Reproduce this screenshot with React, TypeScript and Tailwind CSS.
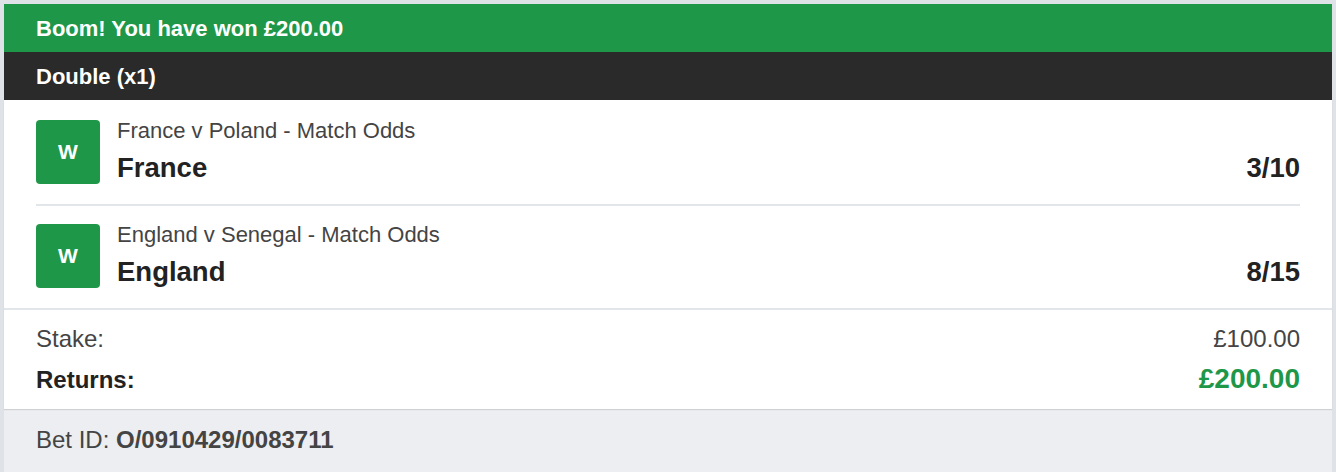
import React from "react";

const font = { fontFamily: '"Liberation Sans", Arial, Helvetica, sans-serif' };

function Leg({ market, selection, odds, first }: { market: string; selection: string; odds: string; first?: boolean }) {
  return (
    <div className={`flex items-start ${first ? "pt-5" : "pt-[18px]"} pb-5`}>
      <div className="flex h-16 w-16 shrink-0 items-center justify-center rounded-[4px] bg-[#1e9749] text-[21px] font-bold text-white">
        W
      </div>
      <div className="ml-[17px] -mt-[2px] flex min-w-0 flex-1 flex-col">
        <div className="text-[22px] leading-[26px] text-[#444]">{market}</div>
        <div className="mt-[8px] flex items-baseline justify-between text-[27.5px] leading-[31px] font-bold text-[#222]">
          <span>{selection}</span>
          <span>{odds}</span>
        </div>
      </div>
    </div>
  );
}

export default function App() {
  return (
    <div className="h-[472px] w-[1336px] overflow-hidden bg-[#dfe3e8] px-1 pt-1" style={font}>
      <div className="flex h-full flex-col bg-[#eceef1]">
        <div className="flex h-12 items-center bg-[#1e9749] px-8 text-[22px] font-bold text-white">
          Boom! You have won £200.00
        </div>
        <div className="flex h-12 items-center bg-[#2a2a2a] px-8 text-[22px] font-bold text-white">
          Double (x1)
        </div>
        <div className="bg-white shadow-[0_1px_1px_rgba(0,0,0,0.12)]">
          <div className="px-8">
            <Leg first market="France v Poland - Match Odds" selection="France" odds="3/10" />
            <div className="h-[2px] bg-[#e2e5e9]" />
            <Leg market="England v Senegal - Match Odds" selection="England" odds="8/15" />
          </div>
          <div className="h-[2px] bg-[#e2e5e9]" />
          <div className="px-8 pt-[15px] pb-[14px]">
            <div className="flex items-baseline justify-between text-[24px] leading-[28px] text-[#444]">
              <span>Stake:</span>
              <span>£100.00</span>
            </div>
            <div className="mt-[11px] flex items-baseline justify-between leading-[30px]">
              <span className="text-[24px] font-bold text-[#222]">Returns:</span>
              <span className="text-[28px] font-bold text-[#1e9749]">£200.00</span>
            </div>
          </div>
        </div>
        <div className="px-8 pt-[17px] text-[24px] leading-[28px] text-[#444]">
          Bet ID: <span className="font-bold">O/0910429/0083711</span>
        </div>
      </div>
    </div>
  );
}
